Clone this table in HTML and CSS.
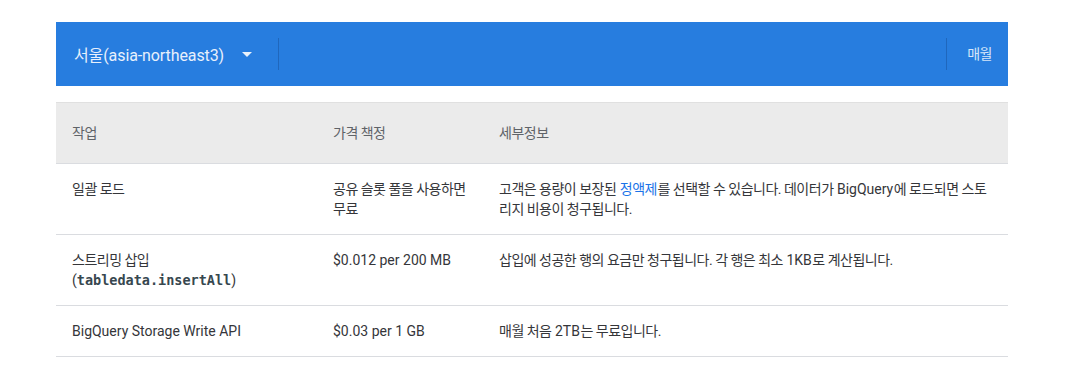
FILE: index.html
```html
<!DOCTYPE html>
<html lang="ko">
<head>
<meta charset="utf-8">
<link rel="stylesheet" href="styles.css">
</head>
<body>
<div class="page">
  <div class="bar">
    <div class="region">
      <span class="region-name">서울(asia-northeast3)</span>
      <svg class="caret" width="10" height="5" viewBox="0 0 10 5"><path d="M0 0h10L5 5z" fill="#fff"/></svg>
    </div>
    <div class="spacer"></div>
    <div class="period">매월</div>
  </div>
  <table class="prices">
    <thead>
      <tr><th class="c1 ko">작업</th><th class="c2 ko">가격 책정</th><th class="c3 ko">세부정보</th></tr>
    </thead>
    <tbody>
      <tr>
        <td class="ko">일괄 로드</td>
        <td class="ko">공유 슬롯 풀을 사용하면 무료</td>
        <td class="ko">고객은 용량이 보장된 <a href="#">정액제</a>를 선택할 수 있습니다. 데이터가 <span class="lat">BigQuery</span>에 로드되면 스토리지 비용이 청구됩니다.</td>
      </tr>
      <tr>
        <td><span class="ko">스트리밍 삽입</span><br>(<code>tabledata.insertAll</code>)</td>
        <td>$0.012 per 200 MB</td>
        <td class="ko">삽입에 성공한 행의 요금만 청구됩니다. 각 행은 최소 <span class="lat">1KB</span>로 계산됩니다.</td>
      </tr>
      <tr>
        <td>BigQuery Storage Write API</td>
        <td>$0.03 per 1 GB</td>
        <td class="ko">매월 처음 <span class="lat">2TB</span>는 무료입니다.</td>
      </tr>
    </tbody>
  </table>
</div>
</body>
</html>
```

FILE: styles.css
```css
html, body {
  margin: 0;
  padding: 0;
  background: #fff;
}
body {
  font-family: Roboto, "Noto Sans CJK KR", sans-serif;
  font-size: 14px;
  color: #35363a;
}
.page {
  padding: 22px 0 0 56px;
  width: 952px;
}
.bar {
  display: flex;
  align-items: center;
  height: 64px;
  background: #277ddf;
  color: #e8f0fc;
}
.region {
  display: flex;
  align-items: center;
  gap: 18px;
  width: 223px;
  height: 32px;
  padding-left: 18px;
  box-sizing: border-box;
  border-right: 1px solid #1f67bd;
}
.region-name {
  font-size: 16px;
  letter-spacing: -0.1px;
}
.caret {
  margin-top: 1px;
  opacity: 0.9;
}
.spacer {
  flex: 1;
}
.period {
  height: 32px;
  line-height: 32px;
  padding: 0 16px 0 20px;
  border-left: 1px solid #1f67bd;
  font-size: 14px;
  letter-spacing: -0.5px;
  color: #d6e6f9;
}
.prices {
  margin-top: 16px;
  width: 952px;
  border-collapse: collapse;
  table-layout: fixed;
}
.prices th, .prices td {
  text-align: left;
  vertical-align: top;
  line-height: 20px;
  padding: 15px 16px 15px;
  border-bottom: 1px solid #dadce0;
}
.prices th {
  background: #ebebeb;
  font-weight: 400;
  color: #5f6368;
  padding: 20px 16px 20px;
  border-top: 1px solid #e0e0e0;
}
.ko {
  letter-spacing: -0.5px;
}
.lat {
  letter-spacing: 0;
  margin: 0 0.5px;
}
.c1 { width: 229px; }
.c2 { width: 134px; }
.prices a {
  color: #1a73e8;
  text-decoration: none;
  margin: 0 0.5px;
}
code {
  font-family: "DejaVu Sans Mono", "Liberation Mono", monospace;
  font-size: 13.5px;
  font-weight: 600;
  color: #37474f;
}
```
